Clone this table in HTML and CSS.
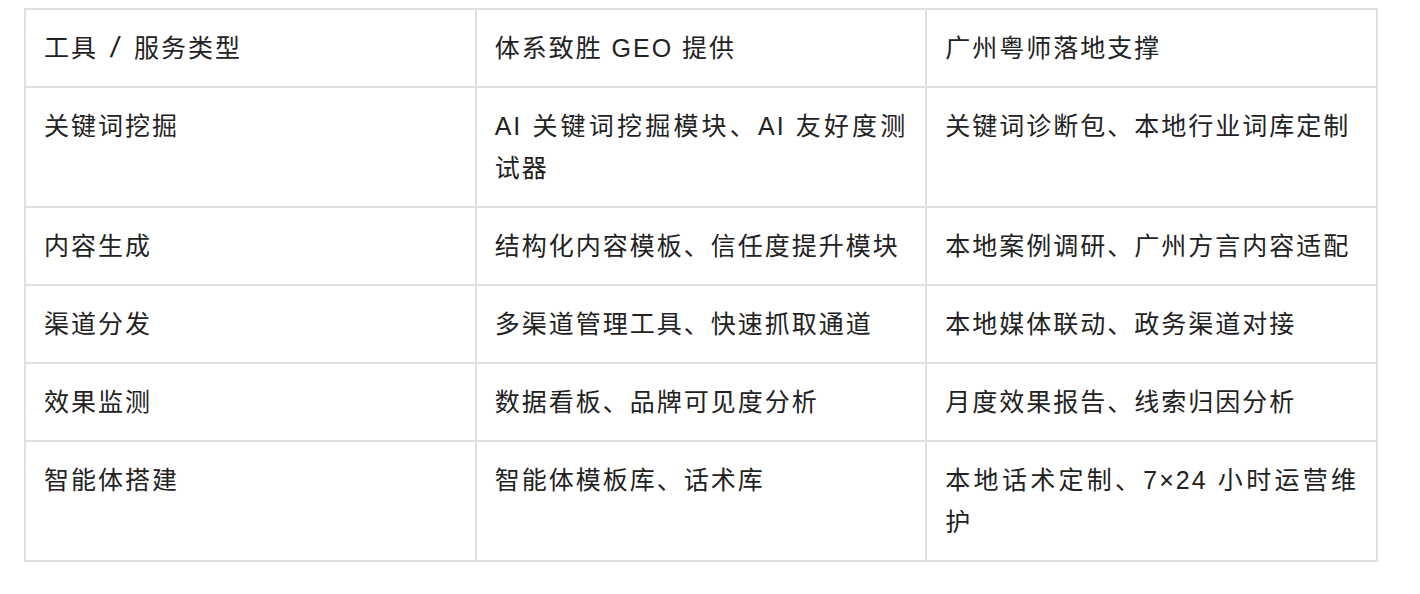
FILE: index.html
```html
<!DOCTYPE html>
<html lang="zh-CN">
<head>
<meta charset="utf-8">
<link rel="stylesheet" href="styles.css">
</head>
<body>
<table class="grid">
  <tbody>
    <tr><td>工具 <span class="sep">/</span> 服务类型</td><td>体系致胜 GEO 提供</td><td>广州粤师落地支撑</td></tr>
    <tr><td>关键词挖掘</td><td>AI 关键词挖掘模块、AI 友好度测试器</td><td>关键词诊断包、本地行业词库定制</td></tr>
    <tr><td>内容生成</td><td>结构化内容模板、信任度提升模块</td><td>本地案例调研、广州方言内容适配</td></tr>
    <tr><td>渠道分发</td><td>多渠道管理工具、快速抓取通道</td><td>本地媒体联动、政务渠道对接</td></tr>
    <tr><td>效果监测</td><td>数据看板、品牌可见度分析</td><td>月度效果报告、线索归因分析</td></tr>
    <tr><td>智能体搭建</td><td>智能体模板库、话术库</td><td>本地话术定制、7×24 小时运营维护</td></tr>
  </tbody>
</table>
</body>
</html>
```

FILE: styles.css
```css
body {
  margin: 8px;
  background: #ffffff;
}

.grid {
  margin-left: 16px;
  width: 1354px;
  table-layout: fixed;
  border-collapse: collapse;
  font-family: "Liberation Sans", "Noto Sans CJK SC", sans-serif;
  font-size: 25px;
  letter-spacing: 2px;
  line-height: 42px;
  color: #222222;
}

.grid td {
  border: 2px solid #dfdfe3;
  padding: 17px 18px;
  vertical-align: top;
  text-align: justify;
}

.sep {
  display: inline-block;
  font-size: 29px;
  line-height: 1;
  margin: 0 4px;
  transform: skewX(-8deg);
}
```
